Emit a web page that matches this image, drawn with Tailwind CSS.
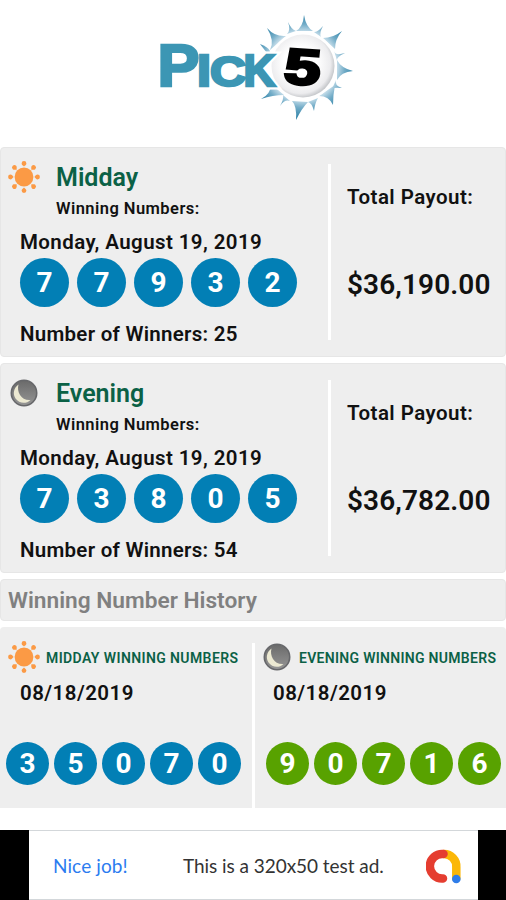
<!DOCTYPE html>
<html lang="en">

<head>
    <meta charset="UTF-8">
    <meta name="viewport" content="width=device-width, initial-scale=1.0">
    <script src="https://cdn.jsdelivr.net/npm/@tailwindcss/browser@4"></script>
    <title>Pick 5</title>
</head>

<body class="bg-white font-['Roboto',sans-serif] font-semibold text-[#111]">
    <!-- shared icons -->
    <svg class="absolute size-0">
        <defs>
            <radialGradient id="ball" cx="0.46" cy="0.46" r="0.54">
                <stop offset="0.5" stop-color="#fff" />
                <stop offset="0.88" stop-color="#ececee" />
                <stop offset="1" stop-color="#c9cbce" />
            </radialGradient>
            <radialGradient id="rays" gradientUnits="userSpaceOnUse" cx="303" cy="66" r="52">
                <stop offset="0.64" stop-color="#cfe3ee" />
                <stop offset="0.8" stop-color="#74adc8" />
                <stop offset="1" stop-color="#2f83a8" />
            </radialGradient>
            <linearGradient id="night" x1="0" y1="0" x2="0" y2="1">
                <stop offset="0" stop-color="#6a6a6a" />
                <stop offset="1" stop-color="#969696" />
            </linearGradient>
        </defs>
        <symbol id="sun" viewBox="-16 -16 32 32">
            <g fill="#fb9a45">
                <circle r="9.4" />
                <g id="pair">
                    <path id="ray" d="M0-10.400C-1-11.400-2.400-12.200-2.400-13.500a2.400 2.400 0 0 1 4.800 0C2.400-12.200 1-11.400 0-10.400z" />
                    <use href="#ray" transform="rotate(45)" />
                </g>
                <use href="#pair" transform="rotate(90)" />
                <use href="#pair" transform="rotate(180)" />
                <use href="#pair" transform="rotate(270)" />
            </g>
        </symbol>
        <symbol id="moon" viewBox="-14 -14 28 28">
            <circle r="12.7" fill="url(#night)" stroke="#66676a" stroke-width="1.6" />
            <path d="M-5.500-8.500C-10.500-5-11.500 1-8.500 5.500C-5 10.500 2 11.500 6.500 7C2 7.500-2 5.500-4 2C-6-1.500-6.500-5-5.500-8.500z" fill="#ece9d2" />
        </symbol>
    </svg>

    <header class="h-[147px]">
        <svg class="w-[506px] h-[147px]" viewBox="0 0 506 147" font-family="Liberation Sans, sans-serif" font-weight="bold">
            <g fill="url(#rays)">
                <path d="M296 31Q303 27 304 15Q306 27 313 31z" />
                <path d="M323 38Q333 38 342 31Q335 39 335 49z" />
                <path d="M337 60Q341 68 353 71Q341 72 337 80z" />
                <path d="M335 85Q333 95 333 105Q329 96 319 96z" />
                <path d="M292 101Q297 106 296 120Q302 108 308 102z" />
                <path d="M284 95Q273 95 261 99Q271 94 271 84z" />
                <path d="M270 50Q275 41 267 28Q275 37 286 36z" />
                <path d="M287 34Q291 30 288 22Q291 29 296 31z" />
                <path d="M314 32Q318 32 323 26Q319 33 321 37z" />
                <path d="M334 51Q335 56 345 53Q336 57 337 61z" />
                <path d="M336 80Q334 85 342 88Q334 87 332 89z" />
                <path d="M308 102Q312 103 314 111Q315 103 318 98z" />
                <path d="M290 101Q285 99 280 106Q284 99 283 95z" />
                <path d="M270 51Q268 47 260 44Q266 52 269 55z" />
            </g>
            <circle cx="303" cy="66" r="34" fill="#fff" />
            <circle cx="303" cy="66" r="31.500" fill="url(#ball)" />
            <!-- white halo keeps the K clear of the ball -->
            <text x="243.500" y="86" font-size="44" textLength="32" lengthAdjust="spacingAndGlyphs" fill="#fff" stroke="#fff" stroke-width="7">K</text>
            <g fill="#3c96b4" stroke="#3c96b4" stroke-width="2.500">
                <text x="157.500" y="85.500" font-size="60" textLength="42" lengthAdjust="spacingAndGlyphs">P</text>
                <text x="197" y="85.500" font-size="44" textLength="14" lengthAdjust="spacingAndGlyphs">I</text>
                <text x="210" y="85.500" font-size="43" textLength="36" lengthAdjust="spacingAndGlyphs">C</text>
                <text x="243.500" y="85.500" font-size="44" textLength="32" lengthAdjust="spacingAndGlyphs">K</text>
            </g>
            <text transform="translate(283 83) rotate(4) skewX(-2)" font-size="50" textLength="36" lengthAdjust="spacingAndGlyphs" fill="#000" stroke="#000" stroke-width="3">5</text>
        </svg>
    </header>

    <main class="flex flex-col gap-1.5">
        <section class="flex h-[210px] rounded bg-[#eee] border border-[#e6e6e6]">
            <div class="w-[327px] pt-[13px] pl-[7px]">
                <div class="flex">
                    <svg class="w-8 h-8"><use href="#sun" /></svg>
                    <div class="pl-4">
                        <h2 class="text-[25px] leading-[34px] text-[#0b6146]">Midday</h2>
                        <p class="text-[16.5px] leading-7 tracking-[0.45px]">Winning Numbers:</p>
                    </div>
                </div>
                <div class="pl-3">
                    <p class="text-[20.5px] leading-[38px] tracking-[0.4px]">Monday, August 19, 2019</p>
                    <div class="flex gap-2 -mt-[3px] text-[28px] font-bold text-white">
                        <span class="flex size-[49px] items-center justify-center rounded-full bg-[#027fb5]">7</span>
                        <span class="flex size-[49px] items-center justify-center rounded-full bg-[#027fb5]">7</span>
                        <span class="flex size-[49px] items-center justify-center rounded-full bg-[#027fb5]">9</span>
                        <span class="flex size-[49px] items-center justify-center rounded-full bg-[#027fb5]">3</span>
                        <span class="flex size-[49px] items-center justify-center rounded-full bg-[#027fb5]">2</span>
                    </div>
                    <p class="pt-3 text-[20.5px] leading-[30px] tracking-[0.27px]">Number of Winners: 25</p>
                </div>
            </div>
            <div class="my-4 w-[3px] bg-white"></div>
            <div class="pt-[31px] pl-4">
                <p class="text-[20.5px] leading-9 tracking-[0.45px]">Total Payout:</p>
                <p class="pt-[50px] text-[28px] leading-10 tracking-[0.1px]">$36,190.00</p>
            </div>
        </section>

        <section class="flex h-[210px] rounded bg-[#eee] border border-[#e6e6e6]">
            <div class="w-[327px] pt-[13px] pl-[7px]">
                <div class="flex">
                    <svg class="w-7 h-7 mt-0.5 mx-0.5"><use href="#moon" /></svg>
                    <div class="pl-4">
                        <h2 class="text-[25px] leading-[34px] text-[#0b6146]">Evening</h2>
                        <p class="text-[16.5px] leading-7 tracking-[0.45px]">Winning Numbers:</p>
                    </div>
                </div>
                <div class="pl-3">
                    <p class="text-[20.5px] leading-[38px] tracking-[0.4px]">Monday, August 19, 2019</p>
                    <div class="flex gap-2 -mt-[3px] text-[28px] font-bold text-white">
                        <span class="flex size-[49px] items-center justify-center rounded-full bg-[#027fb5]">7</span>
                        <span class="flex size-[49px] items-center justify-center rounded-full bg-[#027fb5]">3</span>
                        <span class="flex size-[49px] items-center justify-center rounded-full bg-[#027fb5]">8</span>
                        <span class="flex size-[49px] items-center justify-center rounded-full bg-[#027fb5]">0</span>
                        <span class="flex size-[49px] items-center justify-center rounded-full bg-[#027fb5]">5</span>
                    </div>
                    <p class="pt-3 text-[20.5px] leading-[30px] tracking-[0.27px]">Number of Winners: 54</p>
                </div>
            </div>
            <div class="my-4 w-[3px] bg-white"></div>
            <div class="pt-[31px] pl-4">
                <p class="text-[20.5px] leading-9 tracking-[0.45px]">Total Payout:</p>
                <p class="pt-[50px] text-[28px] leading-10 tracking-[0.1px]">$36,782.00</p>
            </div>
        </section>

        <h2 class="h-[42px] pl-[7px] rounded bg-[#eee] border border-[#e6e6e6] text-[22.7px] leading-[41px] text-[#808080]">Winning Number History</h2>

        <section class="flex h-[181px] bg-[#eee] rounded-t">
            <div class="w-[252px] pt-3.5 pl-2">
                <div class="flex items-center">
                    <svg class="w-8 h-8"><use href="#sun" /></svg>
                    <h3 class="pl-1.5 pt-0.5 text-sm tracking-[0.4px] whitespace-nowrap text-[#0b6146]">MIDDAY WINNING NUMBERS</h3>
                </div>
                <p class="pl-3 text-[20.5px] leading-[41px] tracking-[0.45px]">08/18/2019</p>
                <div class="flex gap-[5px] pt-7 -ml-0.5 text-[28px] font-bold text-white">
                    <span class="flex size-[43px] items-center justify-center rounded-full bg-[#027fb5]">3</span>
                    <span class="flex size-[43px] items-center justify-center rounded-full bg-[#027fb5]">5</span>
                    <span class="flex size-[43px] items-center justify-center rounded-full bg-[#027fb5]">0</span>
                    <span class="flex size-[43px] items-center justify-center rounded-full bg-[#027fb5]">7</span>
                    <span class="flex size-[43px] items-center justify-center rounded-full bg-[#027fb5]">0</span>
                </div>
            </div>
            <div class="mt-4 w-[3px] bg-white"></div>
            <div class="pt-3.5 pl-2">
                <div class="flex h-8 items-center">
                    <svg class="w-7 h-7"><use href="#moon" /></svg>
                    <h3 class="pl-2 pt-0.5 text-sm tracking-[0.3px] whitespace-nowrap text-[#0b6146]">EVENING WINNING NUMBERS</h3>
                </div>
                <p class="pl-2.5 text-[20.5px] leading-[41px] tracking-[0.45px]">08/18/2019</p>
                <div class="flex gap-[5px] pt-7 pl-[3px] text-[28px] font-bold text-white">
                    <span class="flex size-[43px] items-center justify-center rounded-full bg-[#58a200]">9</span>
                    <span class="flex size-[43px] items-center justify-center rounded-full bg-[#58a200]">0</span>
                    <span class="flex size-[43px] items-center justify-center rounded-full bg-[#58a200]">7</span>
                    <span class="flex size-[43px] items-center justify-center rounded-full bg-[#58a200]">1</span>
                    <span class="flex size-[43px] items-center justify-center rounded-full bg-[#58a200]">6</span>
                </div>
            </div>
        </section>
    </main>

    <!-- ad banner -->
    <footer class="mt-[22px] h-[70px] bg-black pl-[29px] pr-7">
        <div class="flex h-full items-center border-y border-[#d3d7da] bg-white pl-6 pt-0.5 font-['Lato',sans-serif] text-[19px] font-normal whitespace-nowrap">
            <span class="w-[130px] tracking-[0.1px] text-[#2b7cf0]">Nice job!</span>
            <span class="w-[243px] tracking-[-0.05px] text-[#333]">This is a 320x50 test ad.</span>
            <svg class="w-9 h-9" viewBox="426 847 36 36" fill="none" stroke-width="8.500" stroke-linecap="round">
                <path d="M444 853A12.300 12.300 0 0 1 456.300 866V877" stroke="#fbb708" />
                <path d="M443.500 853A12.300 12.300 0 1 0 443 877.500" stroke="#e53d30" />
                <circle cx="456.300" cy="878" r="4.300" fill="#2f7de9" />
            </svg>
        </div>
    </footer>
</body>

</html>
